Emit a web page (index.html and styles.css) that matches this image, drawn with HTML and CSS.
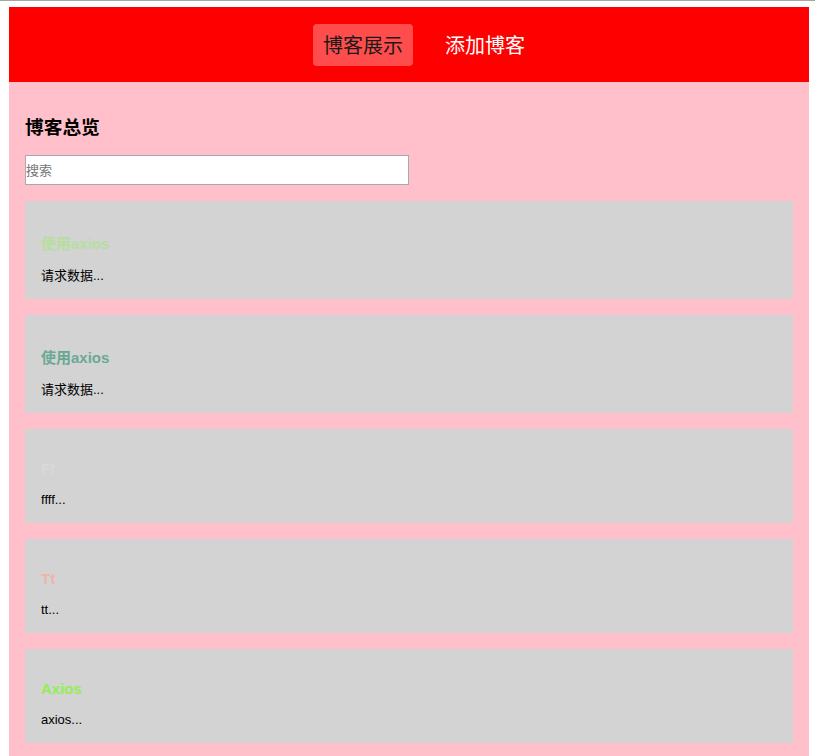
FILE: index.html
```html
<!DOCTYPE html>
<html lang="zh">
<head>
<meta charset="utf-8">
<title>博客</title>
<link rel="stylesheet" href="styles.css">
</head>
<body>
<div class="topline"></div>
<div class="app">
  <header class="nav">
    <a class="nav-item active">博客展示</a>
    <a class="nav-item">添加博客</a>
  </header>
  <main class="content">
    <h3 class="page-title">博客总览</h3>
    <input class="search" type="text" placeholder="搜索">
    <div class="card">
      <h4 class="card-title c1">使用axios</h4>
      <p class="card-body">请求数据...</p>
    </div>
    <div class="card">
      <h4 class="card-title c2">使用axios</h4>
      <p class="card-body">请求数据...</p>
    </div>
    <div class="card">
      <h4 class="card-title c3">Ff</h4>
      <p class="card-body">ffff...</p>
    </div>
    <div class="card">
      <h4 class="card-title c4">Tt</h4>
      <p class="card-body">tt...</p>
    </div>
    <div class="card">
      <h4 class="card-title c5">Axios</h4>
      <p class="card-body">axios...</p>
    </div>
  </main>
</div>
</body>
</html>
```

FILE: styles.css
```css
html, body {
  margin: 0;
  padding: 0;
  background: #ffffff;
  font-family: "Liberation Sans", "Noto Sans CJK SC", sans-serif;
  overflow: hidden;
}
.topline {
  height: 1px;
  background: #a6a6a6;
}
.app {
  width: 800px;
  margin: 6px 0 0 9px;
}
.nav {
  background: #ff0000;
  height: 75px;
  display: flex;
  align-items: center;
  justify-content: center;
  gap: 22px;
  padding-left: 30px;
  box-sizing: border-box;
}
.nav-item {
  font-family: "Noto Sans CJK SC", sans-serif;
  font-size: 20px;
  line-height: 22px;
  padding: 10px;
  color: #ffffff;
  border-radius: 4px;
}
.nav-item.active {
  background: #ff4d4d;
  color: #1a1a1a;
}
.content {
  background: #ffc0cb;
  padding: 16px 16px 12px;
}
.page-title {
  font-size: 18.72px;
  font-weight: bold;
  margin: 19px 0 16px;
  line-height: 22px;
}
.search {
  display: block;
  width: 384px;
  height: 30px;
  box-sizing: border-box;
  border: 1px solid #a9a9a9;
  padding: 0;
  margin: 0 0 16px;
  font-size: 13px;
  font-family: "Liberation Sans", "Noto Sans CJK SC", sans-serif;
  background: #fff;
}
.search::placeholder {
  color: #757575;
}
.card {
  background: #d3d3d3;
  padding: 31px 16px 15px;
  margin-bottom: 16px;
}
.card-title {
  margin: 0 0 14px;
  font-size: 15px;
  font-weight: bold;
}
.card-body {
  margin: 0;
  font-size: 13px;
  line-height: 17px;
  color: #000;
}
.c1 { color: #b6df9e; }
.c2 { color: #6aa894; }
.c3 { color: #d9d9d9; }
.c4 { color: #efb3a9; }
.c5 { color: #92ee52; }
```
